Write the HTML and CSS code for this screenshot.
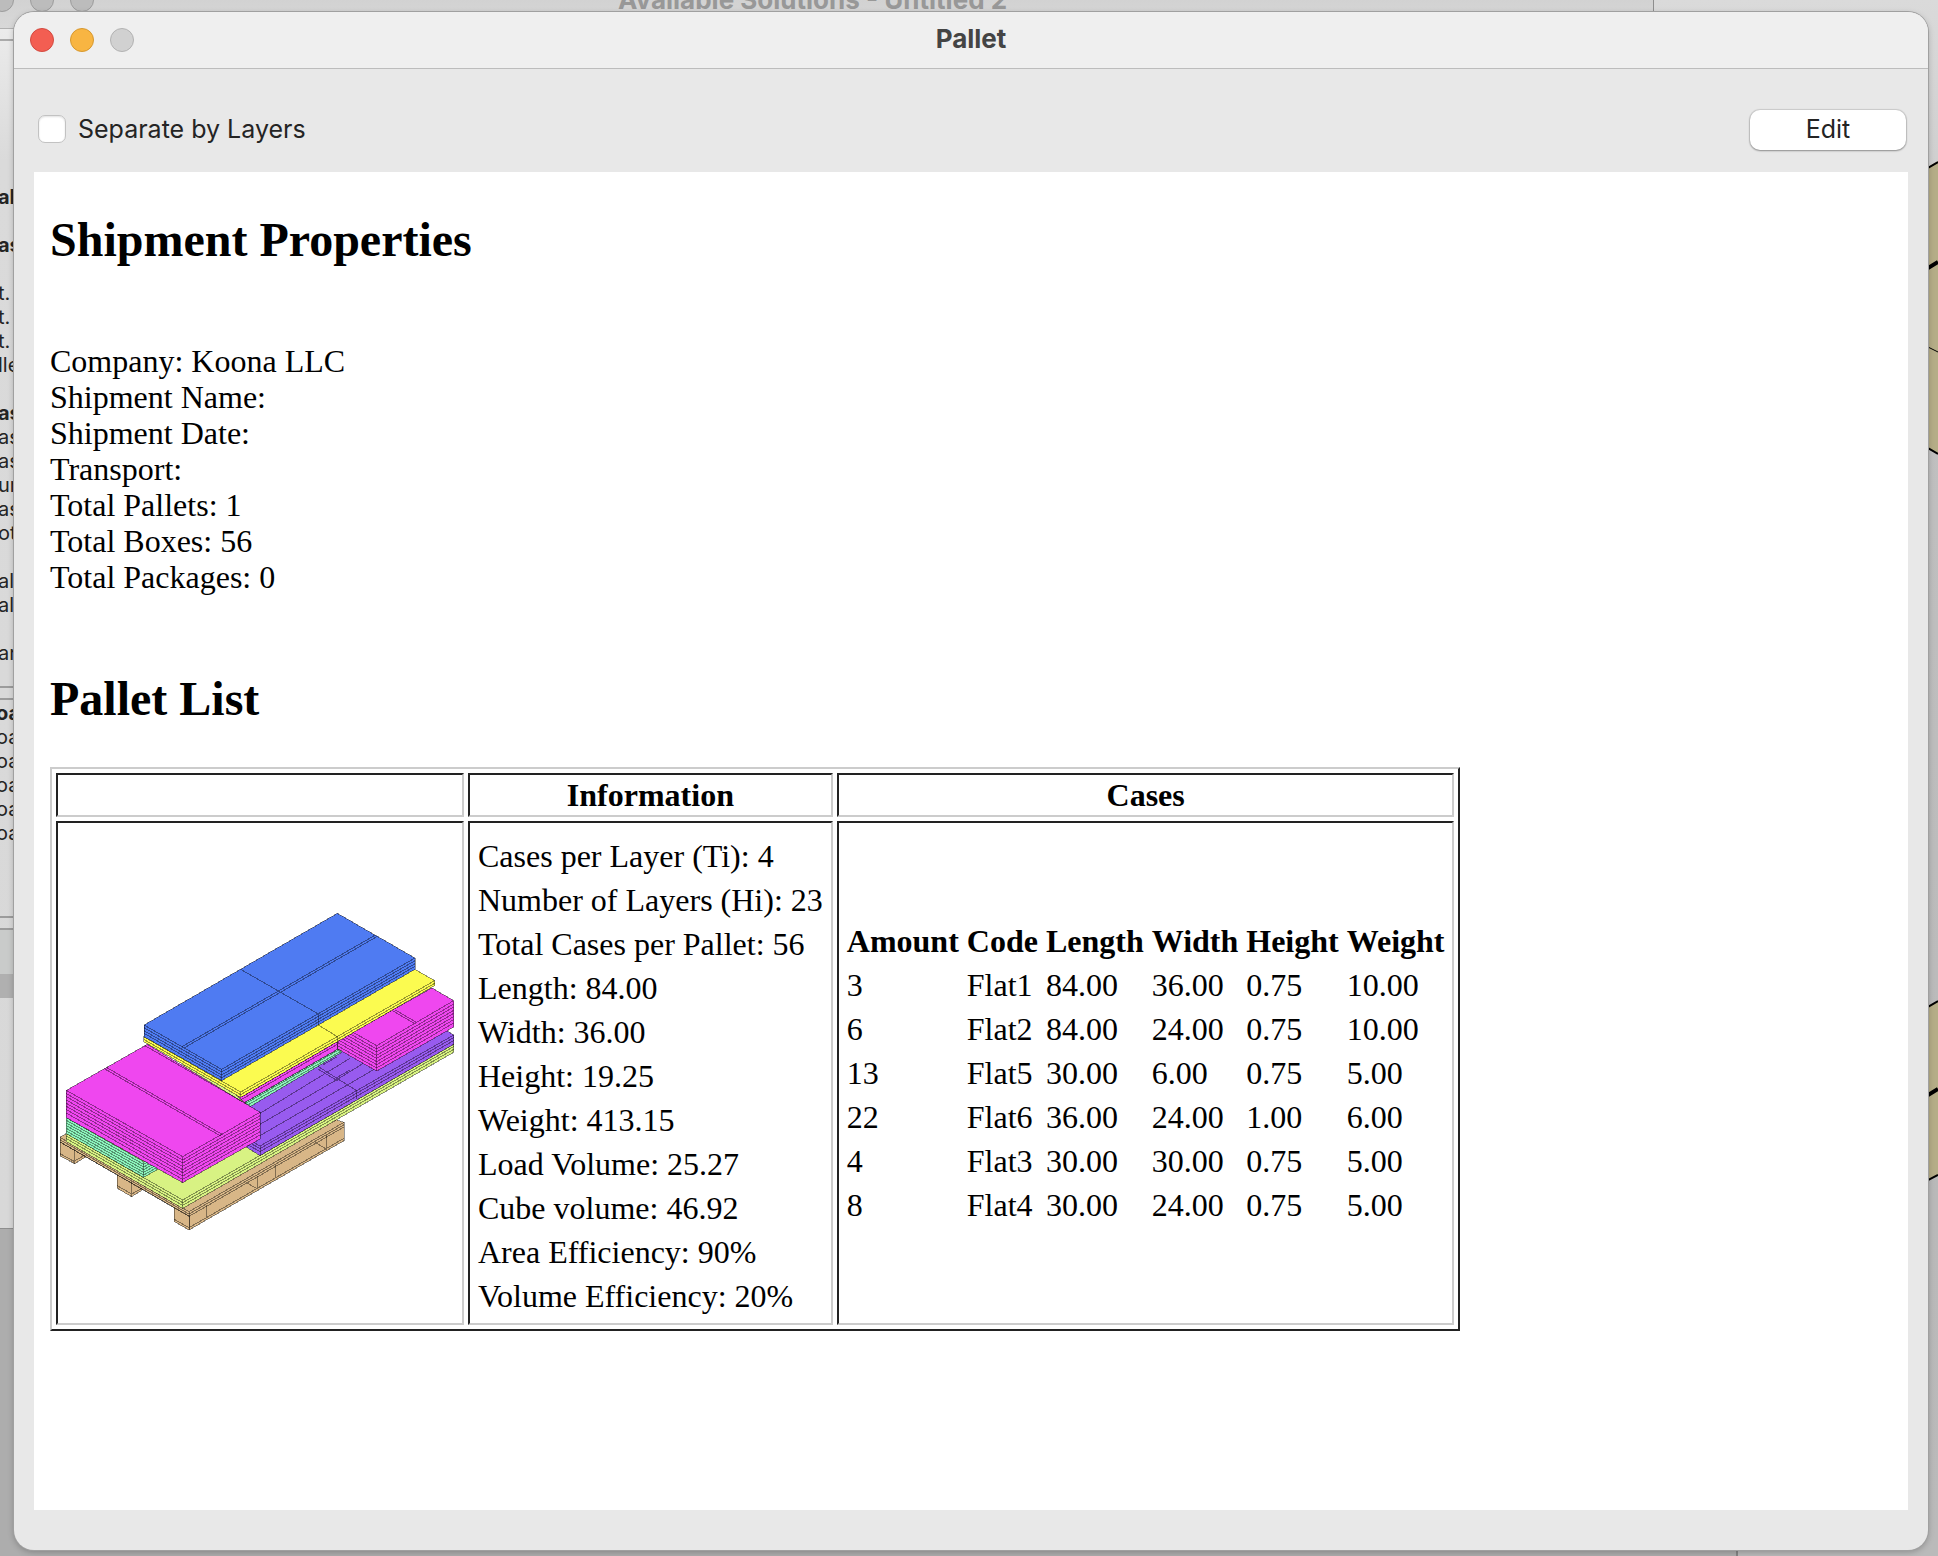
FILE: index.html
```html
<!DOCTYPE html>
<html lang="en">
<head>
<meta charset="utf-8">
<title>Pallet</title>
<link rel="stylesheet" href="styles.css">
</head>
<body>
<div class="desktop">
  <svg class="render" viewBox="0 0 10 1100" aria-hidden="true">
    <path class="khaki" d="M0 67L10 61V354L0 348Z M0 907L10 901V1075L0 1080Z"/>
    <path class="edge" d="M0 68L10 62M0 348L10 354M0 907L10 901M0 1080L10 1075"/>
    <path class="edge heavy" d="M0 168L10 162M0 995L10 989"/>
    <path class="edge fine" d="M0 247L10 252"/>
  </svg>

  <section class="rear" aria-label="Available Solutions">
    <header class="rear-bar">
      <span class="rear-dots"><i class="dot idle"></i><i class="dot idle"></i><i class="dot idle"></i></span>
      <span class="rear-title">Available Solutions - Untitled 2</span>
    </header>
    <div class="rear-details">
      <b>al</b><br><br><b>as</b><br><br>t.<br>t.<br>t.<br>lle<br><br><b>as</b><br>as<br>as<br>ur<br>as<br>ot<br><br>al<br>al<br><br>ar
    </div>
    <div class="rear-loads"><b>oa</b><br>oa<br>oa<br>oa<br>oa<br>oa</div>
    <div class="rear-list"><div class="rear-selected"></div></div>
  </section>
  <div class="rear-foot"></div>

  <main class="window">
    <header class="titlebar">
      <div class="dots"><i class="dot close"></i><i class="dot minimize"></i><i class="dot idle"></i></div>
      <h1 class="title">Pallet</h1>
    </header>
    <div class="toolbar">
      <label class="check"><input type="checkbox" class="box">Separate by Layers</label>
      <button type="button" class="edit">Edit</button>
    </div>
    <article class="report">
      <h2>Shipment Properties</h2>
      <p class="props">Company: Koona LLC<br>Shipment Name:<br>Shipment Date:<br>Transport:<br>Total Pallets: 1<br>Total Boxes: 56<br>Total Packages: 0</p>
      <h2>Pallet List</h2>
      <table class="pallets">
        <tr><th></th><th>Information</th><th>Cases</th></tr>
        <tr>
          <td>
            <svg class="drawing" viewBox="30 -51 1200 1200" role="img" aria-label="Loaded pallet">
              <defs>
                <path id="lime" d="M49 730L398 930L1211 462"/>
                <path id="mint" d="M49 683L281 815L330 787"/>
                <path id="strip" d="M583 638L874 470"/>
                <path id="purple" d="M590 745L630 768L1211 435"/>
                <path id="pinkL" d="M49 601L398 800L630 667"/>
                <path id="pinkR" d="M862 400L980 467L1211 332"/>
                <path id="pinkS" d="M572 614L862 447"/>
                <path id="yellow" d="M281 440L572 606L1154 272"/>
                <path id="blue" d="M282 405L515 538L1095 204"/>
                <path id="deck" d="M30 742L417 965L882 697"/>
                <clipPath id="right"><path d="M862 452L905 428L1146 294L1211 332V411L980 543L862 476Z"/></clipPath>
                <clipPath id="mintclip"><path d="M49 683L281 815L281 800L340 828L281 862L49 731Z"/></clipPath>
              </defs>
              <g class="wood">
                <path d="M30 748L74 773L112 774V798L74 821L30 798Z"/>
                <path d="M202 850L245 874L280 890V898L245 920L202 895Z"/>
                <path d="M373 945L417 970V1020L373 995Z"/>
                <path d="M30 742L50 730L860 690L882 697V752L417 1020V978L30 756Z"/>
                <path class="line" d="M74 778V821M74 813L105 795M30 791L74 815M245 874V920M202 887L245 912L275 895M373 988L417 1013"/>
                <path class="line" d="M417 965V1020M417 1013L882 745M470 945V985M622 858V897M676 826V865M830 735V778M588 877L622 897M795 757L830 778"/>
                <use href="#deck"/><use href="#deck" y="7"/><use href="#deck" y="14"/>
              </g>
              <g class="lime">
                <path d="M49 730L862 262L1211 462V487L398 955L49 755Z"/><path d="M398 930V955"/>
                <use href="#lime"/><use href="#lime" y="8"/><use href="#lime" y="16"/>
              </g>
              <g class="mint">
                <path d="M49 683L281 815L330 787V834L281 862L49 731Z"/><path d="M281 815V862"/>
                <g clip-path="url(#mintclip)"><use href="#mint" y="8"/><use href="#mint" y="16"/><use href="#mint" y="24"/><use href="#mint" y="32"/><use href="#mint" y="40"/></g>
              </g>
              <g class="purple">
                <path d="M583 650L875 480L1190 422L1211 435V463L630 797L590 772Z"/>
                <use href="#purple"/><use href="#purple" y="8"/><use href="#purple" y="17"/>
                <path class="line" d="M630 768V797M630 670L900 505M630 703L862 568L940 520M630 737L990 528M820 524L862 500M805 530L920 602V628M805 538L862 572V562L900 540"/>
              </g>
              <g class="mint">
                <path d="M583 638L862 478L880 484L600 650Z"/>
                <use href="#strip" y="5"/><use href="#strip" y="13"/>
              </g>
              <g class="pink">
                <path d="M560 615L862 445V478L583 638Z"/>
                <use href="#pinkS" y="8"/><use href="#pinkS" y="16"/>
                <path d="M862 440L905 428L1146 294L1211 332V411L980 543L862 476Z"/>
                <g clip-path="url(#right)">
                  <use href="#pinkR"/><use href="#pinkR" y="10"/><use href="#pinkR" y="19"/><use href="#pinkR" y="29"/><use href="#pinkR" y="38"/><use href="#pinkR" y="48"/><use href="#pinkR" y="57"/><use href="#pinkR" y="67"/>
                </g>
                <path class="line" d="M980 467V543M1028 362L1092 400M1034 359L1098 396"/>
                <path d="M49 601L292 463L630 667V747L398 878L49 683Z"/>
                <use href="#pinkL"/><use href="#pinkL" y="10"/><use href="#pinkL" y="19"/><use href="#pinkL" y="29"/><use href="#pinkL" y="39"/><use href="#pinkL" y="48"/><use href="#pinkL" y="58"/><use href="#pinkL" y="68"/>
                <path class="line" d="M398 800V878M163 536L512 738M169 532L518 734M285 467L575 634"/>
              </g>
              <g class="yellow">
                <path d="M281 440L1095 238L1154 272V287L572 622L281 455Z"/>
                <use href="#yellow"/><use href="#yellow" y="8"/>
                <path class="line" d="M572 606V622M805 405L862 440V476"/>
              </g>
              <g class="blue">
                <path d="M282 405L862 70L1095 204V238L515 572L282 440Z"/>
                <use href="#blue"/><use href="#blue" y="8"/><use href="#blue" y="17"/><use href="#blue" y="25"/>
                <path class="line" d="M515 538V572M572 238L805 372V405M396 470L976 135M402 474L982 139"/>
              </g>
            </svg>
          </td>
          <td class="info">
            <table class="inner">
              <tr><td>Cases per Layer (Ti): 4</td></tr>
              <tr><td>Number of Layers (Hi): 23</td></tr>
              <tr><td>Total Cases per Pallet: 56</td></tr>
              <tr><td>Length: 84.00</td></tr>
              <tr><td>Width: 36.00</td></tr>
              <tr><td>Height: 19.25</td></tr>
              <tr><td>Weight: 413.15</td></tr>
              <tr><td>Load Volume: 25.27</td></tr>
              <tr><td>Cube volume: 46.92</td></tr>
              <tr><td>Area Efficiency: 90%</td></tr>
              <tr><td>Volume Efficiency: 20%</td></tr>
            </table>
          </td>
          <td>
            <table class="inner">
              <tr><th>Amount</th><th>Code</th><th>Length</th><th>Width</th><th>Height</th><th>Weight</th></tr>
              <tr><td>3</td><td>Flat1</td><td>84.00</td><td>36.00</td><td>0.75</td><td>10.00</td></tr>
              <tr><td>6</td><td>Flat2</td><td>84.00</td><td>24.00</td><td>0.75</td><td>10.00</td></tr>
              <tr><td>13</td><td>Flat5</td><td>30.00</td><td>6.00</td><td>0.75</td><td>5.00</td></tr>
              <tr><td>22</td><td>Flat6</td><td>36.00</td><td>24.00</td><td>1.00</td><td>6.00</td></tr>
              <tr><td>4</td><td>Flat3</td><td>30.00</td><td>30.00</td><td>0.75</td><td>5.00</td></tr>
              <tr><td>8</td><td>Flat4</td><td>30.00</td><td>24.00</td><td>0.75</td><td>5.00</td></tr>
            </table>
          </td>
        </tr>
      </table>
    </article>
  </main>
</div>
</body>
</html>
```
FILE: styles.css
```css
* { box-sizing: border-box; }

body {
  margin: 0;
  font-family: Inter, "Liberation Sans", sans-serif;
  color: #242424;
}

.desktop {
  position: relative;
  min-height: 100vh;
  padding: 12px 10px 6px 14px;
  overflow: hidden;
  display: flex;
  background: linear-gradient(#dadada, #c0c0c0 400px, #b9b9b9 1200px, #bababa);
}

/* Windows behind the front one */
.render {
  position: absolute;
  top: 100px;
  right: 0;
  width: 10px;
  height: 1100px;
}
.khaki { fill: #b5ad87; }
.edge { fill: none; stroke: #000; stroke-width: 2; }
.heavy { stroke-width: 4; }
.fine { stroke-width: 1; }

.rear {
  position: absolute;
  z-index: 1;
  top: 0;
  left: 0;
  right: 284px;
  height: 1229px;
  overflow: hidden;
  display: flex;
  flex-direction: column;
  background: linear-gradient(#efefef, #dadada 160px, #d8d8d8);
  border-right: 1px solid #8e8e8e;
  border-bottom: 1px solid #8e8e8e;
  font-size: 20px;
  line-height: 24px;
}
.rear-bar {
  height: 29px;
  flex: none;
  display: grid;
  grid-template-columns: 100px 1fr 128px;
  background: linear-gradient(#d2d2d2, #d8d8d8);
  border-bottom: 1px solid #b0b0b0;
}
.rear-dots { display: flex; gap: 16px; margin: -12px 0 0 -10px; }
.rear-title {
  margin-top: -16px;
  text-align: center;
  font-size: 26px;
  line-height: 32px;
  font-weight: 700;
  color: #989898;
}
.rear-details {
  height: 649px;
  margin: 10px 0 0 -2px;
  padding-top: 144px;
  white-space: nowrap;
  border-top: 2px solid #aaa;
  border-bottom: 2px solid #9c9c9c;
}
.rear-loads {
  height: 220px;
  margin: 10px 0 0 -4px;
  padding-top: 1px;
  white-space: nowrap;
  border-top: 2px solid #9c9c9c;
  border-bottom: 2px solid #9c9c9c;
}
.rear-list {
  height: 70px;
  margin-top: 10px;
  display: flex;
  align-items: flex-end;
  border-top: 2px solid #9c9c9c;
  background: #c9cbca;
}
.rear-selected { width: 100%; height: 24px; background: #b0b0b0; }
.rear-foot {
  position: absolute;
  left: 0;
  right: 200px;
  bottom: 0;
  height: 327px;
  border-right: 2px solid #858585;
  background: #adadad;
}

/* Front window */
.window {
  position: relative;
  z-index: 2;
  flex: 1;
  display: flex;
  flex-direction: column;
  border-radius: 20px;
  overflow: hidden;
  background: #e8e8e8;
  box-shadow: 0 0 0 1px #a0a0a0, 0 2px 6px rgba(0, 0, 0, .25);
}
.titlebar {
  display: grid;
  grid-template-columns: 1fr auto 1fr;
  align-items: center;
  height: 57px;
  padding: 0 16px;
  background: #efefef;
  border-bottom: 1px solid #bcbcbc;
}
.dots { display: flex; gap: 16px; }
.dot {
  width: 24px;
  height: 24px;
  border-radius: 50%;
  border: 1px solid #b2b2b2;
  background: #d1d1d1;
}
.close { background: #f35e52; border-color: #d24a40; }
.minimize { background: #f8b542; border-color: #d6982f; }
.rear .dot { background: #bcbcbc; border-color: #9c9c9c; }
.title {
  margin: 0 0 2px;
  font-size: 26px;
  line-height: 32px;
  font-weight: 700;
  color: #444;
}

.toolbar {
  display: flex;
  align-items: center;
  justify-content: space-between;
  padding: 41px 22px 22px 24px;
}
.check {
  display: flex;
  align-items: center;
  gap: 12px;
  padding-bottom: 2px;
  font-size: 25px;
  line-height: 32px;
}
.box {
  appearance: none;
  width: 28px;
  height: 28px;
  margin: 0;
  border: 1px solid #c2c2c2;
  border-radius: 7px;
  background: #fff;
  box-shadow: inset 0 1px 2px rgba(0, 0, 0, .12);
}
.edit {
  width: 156px;
  height: 40px;
  padding: 0 0 2px;
  border: 0;
  border-radius: 10px;
  background: #fff;
  box-shadow: 0 0 1px 1px rgba(0, 0, 0, .12), 0 1px 2px rgba(0, 0, 0, .3);
  font: 25px/32px Inter, "Liberation Sans", sans-serif;
  color: #242424;
}

.report {
  flex: 1;
  margin: 0 20px 40px;
  padding: 40px 16px;
  background: #fff;
  color: #000;
  font: 32px/36px "Liberation Serif", "Times New Roman", serif;
}
.report h2 { margin: 0; font-size: 48px; line-height: 56px; }
.report .props { margin: 75px 0 76px; }

.pallets {
  margin-top: 40px;
  border: 2px solid;
  border-color: #ccc #222 #222 #ccc;
  border-spacing: 4px;
}
.pallets > tbody > tr > * {
  padding: 2px;
  border: 2px solid;
  border-color: #222 #ccc #ccc #222;
}
.pallets > tbody > tr > .info { padding: 9px 2px 3px; }
.inner { border-spacing: 4px; }
.inner th, .inner td { padding: 2px; text-align: left; }

.drawing { display: block; width: 400px; height: 400px; }
.drawing g {
  stroke: rgba(0, 0, 0, .4);
  stroke-width: 3;
  stroke-linejoin: round;
  shape-rendering: crispEdges;
}
.drawing use, .drawing .line { fill: none; }
.wood { fill: #d8b687; }
.lime { fill: #d8f283; }
.mint { fill: #8cf3bb; }
.purple { fill: #985bef; }
.pink { fill: #ef47ef; }
.yellow { fill: #fbfb50; }
.blue { fill: #4f7bf2; }
```
